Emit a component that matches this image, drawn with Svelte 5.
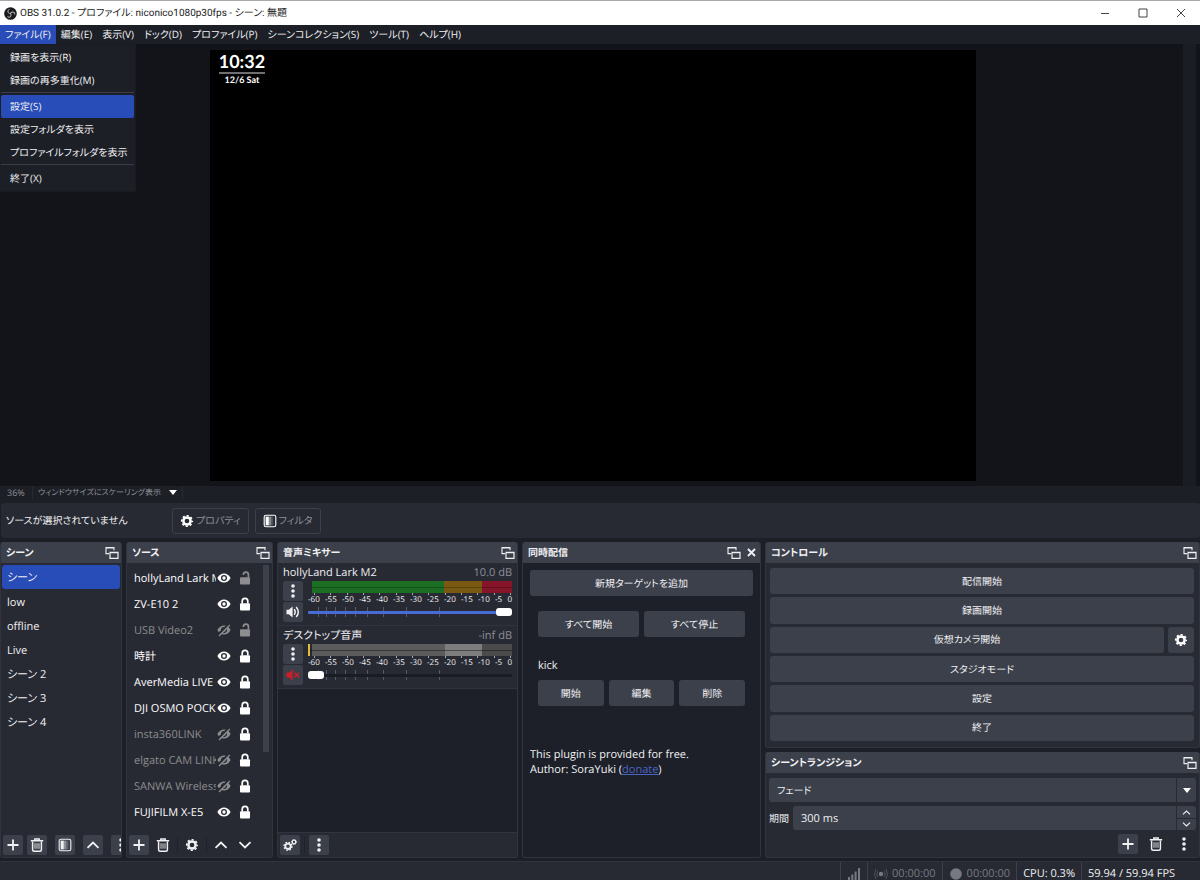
<script lang="ts">
  type Source = { name: string; visible: boolean; locked: boolean };
  type Track = { name: string; db: string; volume: number; muted: boolean };

  const menus = [
    'ファイル(F)', '編集(E)', '表示(V)', 'ドック(D)', 'プロファイル(P)',
    'シーンコレクション(S)', 'ツール(T)', 'ヘルプ(H)',
  ];
  const fileMenu = [
    ['録画を表示(R)', '録画の再多重化(M)'],
    ['設定(S)', '設定フォルダを表示', 'プロファイルフォルダを表示'],
    ['終了(X)'],
  ];
  const scenes = ['シーン', 'low', 'offline', 'Live', 'シーン 2', 'シーン 3', 'シーン 4'];
  const levels = [-60, -55, -50, -45, -40, -35, -30, -25, -20, -15, -10, -5, 0];
  const faderMarks = [5, 9, 13, 18, 23, 29, 37, 48, 64];

  let activeScene = $state('シーン');
  let sources: Source[] = $state([
    { name: 'hollyLand Lark M2', visible: true, locked: false },
    { name: 'ZV-E10 2', visible: true, locked: true },
    { name: 'USB Video2', visible: false, locked: false },
    { name: '時計', visible: true, locked: true },
    { name: 'AverMedia LIVE GAMER', visible: true, locked: true },
    { name: 'DJI OSMO POCKET', visible: true, locked: true },
    { name: 'insta360LINK', visible: false, locked: true },
    { name: 'elgato CAM LINK', visible: false, locked: true },
    { name: 'SANWA Wireless', visible: false, locked: true },
    { name: 'FUJIFILM X-E5', visible: true, locked: true },
  ]);
  let tracks: Track[] = $state([
    { name: 'hollyLand Lark M2', db: '10.0 dB', volume: 100, muted: false },
    { name: 'デスクトップ音声', db: '-inf dB', volume: 0, muted: true },
  ]);
</script>

{#snippet plus()}
  <svg class="icon" viewBox="0 0 14 14"><path d="M7 1.5v11M1.5 7h11" stroke="currentColor" stroke-width="1.8" /></svg>
{/snippet}
{#snippet trash()}
  <svg class="icon" viewBox="0 0 14 14" fill="none" stroke="currentColor">
    <path d="M.8 2.8h12.4M4.8 2.5V1h4.4v1.5" stroke-width="1.4" />
    <path d="M2.6 3.5v8.2q0 1.5 1.5 1.5h5.8q1.5 0 1.5-1.5V3.5" stroke-width="1.5" />
    <path d="M5 5.2v5.6M7 5.2v5.6M9 5.2v5.6" stroke-width="1.2" opacity=".75" />
  </svg>
{/snippet}
{#snippet filter()}
  <svg class="icon" viewBox="0 0 14 14">
    <rect x="1.2" y="1.2" width="11.6" height="11.6" rx="1.8" fill="none" stroke="currentColor" stroke-width="1.1" />
    <rect x="2.6" y="2.6" width="3.2" height="8.8" fill="currentColor" />
    <rect x="5.8" y="2.6" width="2.4" height="8.8" fill="currentColor" opacity=".45" />
    <rect x="8.2" y="2.6" width="2" height="8.8" fill="currentColor" opacity=".2" />
  </svg>
{/snippet}
{#snippet gear()}
  <svg class="icon" viewBox="0 0 14 14" fill="none" stroke="currentColor">
    <circle cx="7" cy="7" r="3.6" stroke-width="2.5" />
    <circle cx="7" cy="7" r="5.3" stroke-width="1.6" stroke-dasharray="2.2 1.963" stroke-dashoffset="1.1" />
  </svg>
{/snippet}
{#snippet gears()}
  <svg class="icon" viewBox="0 0 14 14" fill="none" stroke="currentColor">
    <circle cx="5" cy="8.3" r="2.7" stroke-width="1.8" />
    <circle cx="5" cy="8.3" r="3.9" stroke-width="1.5" stroke-dasharray="1.6 1.463" />
    <circle cx="11" cy="4" r="1.8" stroke-width="1.3" />
    <circle cx="11" cy="4" r="2.5" stroke-width=".9" stroke-dasharray="1 .963" />
  </svg>
{/snippet}
{#snippet up()}
  <svg class="icon" viewBox="0 0 14 14"><path d="M1.5 9.8 7 4.6l5.5 5.2" fill="none" stroke="currentColor" stroke-width="1.8" /></svg>
{/snippet}
{#snippet down()}
  <svg class="icon" viewBox="0 0 14 14"><path d="M1.5 4.2 7 9.4l5.5-5.2" fill="none" stroke="currentColor" stroke-width="1.8" /></svg>
{/snippet}
{#snippet dots()}
  <svg class="icon" viewBox="0 0 14 14" fill="currentColor">
    <circle cx="7" cy="2" r="1.8" /><circle cx="7" cy="7" r="1.8" /><circle cx="7" cy="12" r="1.8" />
  </svg>
{/snippet}
{#snippet float()}
  <svg class="icon" viewBox="0 0 14 14" fill="none" stroke="currentColor">
    <path d="M4 7.6H1V1.5h8v2.8M.5 2h9" stroke-width="1.1" />
    <path d="M5 6.4h8v6H5zM4.5 6.7h9" stroke-width="1.2" />
  </svg>
{/snippet}
{#snippet eye(on: boolean)}
  <svg class="icon" viewBox="0 0 14 14">
    <path d="M.4 7C3.2.9 10.800.9 13.600 7 10.800 13.100 3.200 13.100.4 7z" fill="currentColor" />
    <circle cx="7" cy="7" r="3" fill="#272a33" />
    <circle cx="7" cy="7" r="1.700" fill="currentColor" />
    {#if !on}
      <path d="M12.6.6.8 12" stroke="#272a33" stroke-width="2.4" />
      <path d="M12.8 2 2 13" stroke="currentColor" stroke-width="1.3" />
    {/if}
  </svg>
{/snippet}
{#snippet lock(on: boolean)}
  <svg class="icon" viewBox="0 0 14 14">
    <rect x="2" y="6.2" width="10" height="7.2" rx="1" fill="currentColor" />
    <path d={on ? 'M4.2 6.5V4.2a2.8 2.8 0 0 1 5.6 0v2.3' : 'M5.4 4V3.6a2.5 2.5 0 0 1 5 0v3'} fill="none" stroke="currentColor" stroke-width="1.7" />
  </svg>
{/snippet}
{#snippet speaker(muted: boolean)}
  <svg class="icon" viewBox="0 0 14 14">
    <path d="M.5 4.7h2.3L6.6 1.4v11.2L2.8 9.3H.5z" fill="currentColor" />
    {#if muted}
      <path d="m8.6 4.8 4.4 4.4m0-4.4L8.6 9.2" stroke="currentColor" stroke-width="1.5" />
    {:else}
      <path d="M8.2 4.2q2 2.8 0 5.6M10.2 1.9q4.2 5.1 0 10.2" fill="none" stroke="currentColor" stroke-width="1.5" />
    {/if}
  </svg>
{/snippet}
{#snippet dockHead(title: string, closable: boolean)}
  <header class="dock-head">
    <h2>{title}</h2>
    <button class="bare" aria-label="フローティング">{@render float()}</button>
    {#if closable}
      <button class="bare close" aria-label="閉じる">
        <svg class="icon" viewBox="0 0 14 14"><path d="m3.2 3.2 7.6 7.6m0-7.6-7.6 7.6" stroke="currentColor" stroke-width="2" /></svg>
      </button>
    {/if}
  </header>
{/snippet}

<div class="window">
  <header class="titlebar">
    <svg class="logo" viewBox="0 0 14 14">
      <circle cx="7" cy="7" r="6.8" fill="#1c1a1d" />
      <g fill="none" stroke="#c4c4c6" stroke-width="1">
        <path d="M5.600 2.400q-2.400 1.600-1 3.700 1 1.300 2.600.8" />
        <path d="M5.600 2.400q-2.400 1.600-1 3.700 1 1.300 2.600.8" transform="rotate(120 7 7)" />
        <path d="M5.600 2.400q-2.400 1.600-1 3.700 1 1.300 2.600.8" transform="rotate(240 7 7)" />
      </g>
    </svg>
    <h1>OBS 31.0.2 - プロファイル: niconico1080p30fps - シーン: 無題</h1>
    <div class="window-buttons">
      <button aria-label="最小化"><svg viewBox="0 0 10 10"><path d="M1 5.5h8" /></svg></button>
      <button aria-label="最大化"><svg viewBox="0 0 10 10"><path d="M1 1h8v8H1z" /></svg></button>
      <button aria-label="閉じる"><svg viewBox="0 0 10 10"><path d="m1 1 8 8m0-8L1 9" /></svg></button>
    </div>
  </header>

  <nav class="menubar">
    {#each menus as label, i}
      <button class:open={i === 0}>{label}</button>
    {/each}
    <div class="file-menu" role="menu">
      {#each fileMenu as group}
        <div class="menu-group">
          {#each group as label}
            <button role="menuitem" class:selected={label === '設定(S)'}>{label}</button>
          {/each}
        </div>
      {/each}
    </div>
  </nav>

  <main class="preview">
    <div class="stage">
      <div class="canvas">
        <div class="clock">
          <time>10:32</time>
          <span>12/6 Sat</span>
        </div>
      </div>
    </div>
    <div class="scroll-strip"></div>
  </main>

  <div class="scale-bar">
    <span>36%</span>
    <button>ウィンドウサイズにスケーリング表示
      <svg viewBox="0 0 8 5"><path d="M0 0h8L4 5z" fill="#fff" /></svg>
    </button>
  </div>

  <section class="context-bar">
    <span>ソースが選択されていません</span>
    <button>{@render gear()}プロパティ</button>
    <button>{@render filter()}フィルタ</button>
  </section>

  <div class="docks">
    <section class="dock">
      {@render dockHead('シーン', false)}
      <ul class="scenes">
        {#each scenes as scene}
          <li><button class:selected={scene === activeScene} onclick={() => (activeScene = scene)}>{scene}</button></li>
        {/each}
      </ul>
      <footer class="tools">
        <button class="tool filled" aria-label="追加">{@render plus()}</button>
        <button class="tool filled" aria-label="削除">{@render trash()}</button>
        <i></i>
        <button class="tool filled" aria-label="フィルタ">{@render filter()}</button>
        <i></i>
        <button class="tool filled" aria-label="上へ">{@render up()}</button>
        <i></i>
        <button class="tool filled" aria-label="その他">{@render dots()}</button>
      </footer>
    </section>

    <section class="dock">
      {@render dockHead('ソース', false)}
      <div class="source-area">
        <ul class="sources">
          {#each sources as source}
            <li class:off={!source.visible}>
              <span>{source.name}</span>
              <button class="bare" aria-label="表示" onclick={() => (source.visible = !source.visible)}>{@render eye(source.visible)}</button>
              <button class="bare" class:unlocked={!source.locked} aria-label="ロック" onclick={() => (source.locked = !source.locked)}>{@render lock(source.locked)}</button>
            </li>
          {/each}
        </ul>
        <div class="thumb"></div>
      </div>
      <footer class="tools">
        <button class="tool filled" aria-label="追加">{@render plus()}</button>
        <button class="tool" aria-label="削除">{@render trash()}</button>
        <i></i>
        <button class="tool" aria-label="プロパティ">{@render gear()}</button>
        <i></i>
        <button class="tool" aria-label="上へ">{@render up()}</button>
        <button class="tool" aria-label="下へ">{@render down()}</button>
      </footer>
    </section>

    <section class="dock dark">
      {@render dockHead('音声ミキサー', false)}
      {#each tracks as track, i}
        <div class="track">
          <div class="track-head">
            <label for="volume-{i}">{track.name}</label>
            <output>{track.db}</output>
          </div>
          <div class="track-body">
            <div class="track-buttons">
              <button class="tool filled" aria-label="オプション">{@render dots()}</button>
              <button class="tool filled" class:muted={track.muted} aria-label="ミュート" onclick={() => (track.muted = !track.muted)}>{@render speaker(track.muted)}</button>
            </div>
            <div class="levels">
              <div class="meter" class:muted={track.muted}></div>
              <div class="scale">
                {#each levels as level}
                  <span>{level}</span>
                {/each}
              </div>
              <div class="fader">
                {#each faderMarks as mark}
                  <i style="left: {mark}%"></i>
                {/each}
                <input id="volume-{i}" type="range" min="0" max="100" bind:value={track.volume} style="--fill: {track.volume}%" />
              </div>
            </div>
          </div>
        </div>
      {/each}
      <footer class="tools bordered">
        <button class="tool filled" aria-label="オーディオの詳細">{@render gears()}</button>
        <i></i>
        <button class="tool filled" aria-label="メニュー">{@render dots()}</button>
      </footer>
    </section>

    <section class="dock dark">
      {@render dockHead('同時配信', true)}
      <div class="multi">
        <button class="push">新規ターゲットを追加</button>
        <div class="target">
          <div class="row">
            <button class="push">すべて開始</button>
            <button class="push">すべて停止</button>
          </div>
          <h3>kick</h3>
          <div class="row">
            <button class="push">開始</button>
            <button class="push">編集</button>
            <button class="push">削除</button>
          </div>
        </div>
        <p>This plugin is provided for free.<br />Author: SoraYuki (<a href="#donate">donate</a>)</p>
      </div>
    </section>

    <div class="stack">
      <section class="dock">
        {@render dockHead('コントロール', false)}
        <div class="controls">
          <button class="push">配信開始</button>
          <button class="push">録画開始</button>
          <div class="row">
            <button class="push">仮想カメラ開始</button>
            <button class="push square" aria-label="仮想カメラの設定">{@render gear()}</button>
          </div>
          <button class="push">スタジオモード</button>
          <button class="push">設定</button>
          <button class="push">終了</button>
        </div>
      </section>

      <section class="dock">
        {@render dockHead('シーントランジション', false)}
        <div class="transition">
          <div class="field">
            <select aria-label="トランジション">
              <option>フェード</option>
            </select>
            <span class="side"><svg viewBox="0 0 8 5"><path d="M0 0h8L4 5z" fill="#fff" /></svg></span>
          </div>
          <div class="duration">
            <label for="duration">期間</label>
            <div class="field">
              <input id="duration" type="text" value="300 ms" />
              <div class="side spin">
                <button class="bare" aria-label="増やす">{@render up()}</button>
                <button class="bare" aria-label="減らす">{@render down()}</button>
              </div>
            </div>
          </div>
          <footer class="tools end">
            <button class="tool filled" aria-label="追加">{@render plus()}</button>
            <button class="tool" aria-label="削除">{@render trash()}</button>
            <button class="tool" aria-label="その他">{@render dots()}</button>
          </footer>
        </div>
      </section>
    </div>
  </div>

  <footer class="statusbar">
    <div>
      <svg class="icon" viewBox="0 0 14 14" fill="currentColor"><path d="M1 10h2v3H1zM4.300 7.500h2V13h-2zM7.600 4.500h2V13h-2zM11 1h2v12h-2z" /></svg>
    </div>
    <div>
      <svg class="icon" viewBox="0 0 14 14" fill="none" stroke="currentColor">
        <circle cx="7" cy="7" r="2.2" fill="currentColor" stroke="none" />
        <path d="M3.900 3.900q-2.200 3.100 0 6.200M10.100 3.900q2.200 3.100 0 6.200M2 2q-3 5 0 10M12 2q3 5 0 10" opacity=".5" />
      </svg>
      00:00:00
    </div>
    <div>
      <svg class="icon" viewBox="0 0 14 14"><circle cx="7" cy="7" r="5.800" fill="currentColor" /></svg>
      00:00:00
    </div>
    <div class="bright">CPU: 0.3%</div>
    <div class="bright fps">59.94 / 59.94 FPS</div>
  </footer>
</div>

<style>
  :global(body) {
    margin: 0;
    background: #1d1f27;
  }
  .window {
    display: flex;
    flex-direction: column;
    height: 100vh;
    min-height: 620px;
    box-sizing: border-box;
    overflow: hidden;
    border-top: 1px solid #a9a9ab;
    color: #f0f0f2;
    font: 11px/15px 'Open Sans', 'Noto Sans CJK JP', sans-serif;
    font-feature-settings: 'palt';
    text-rendering: geometricPrecision;
  }
  .window * {
    box-sizing: border-box;
  }
  button, input, select {
    margin: 0;
    padding: 0;
    border: none;
    background: none;
    color: inherit;
    font: inherit;
    font-feature-settings: inherit;
    text-rendering: inherit;
    white-space: nowrap;
  }
  h1, h2, h3, p, ul {
    margin: 0;
    padding: 0;
    font-size: inherit;
    list-style: none;
  }
  svg {
    display: block;
    flex: none;
  }
  .icon {
    width: 14px;
    height: 14px;
  }

  .titlebar {
    display: flex;
    align-items: center;
    height: 24px;
    padding-left: 4px;
    background: #fff;
    color: #1b1b1b;
    font-family: Roboto, 'Noto Sans CJK JP', sans-serif;
    font-size: 10px;
  }
  .titlebar h1 {
    flex: 1;
    font-weight: 400;
  }
  .logo {
    width: 13px;
    height: 13px;
    margin-right: 3px;
  }
  .window-buttons button {
    width: 38px;
    height: 24px;
    padding: 0 14px;
  }
  .window-buttons {
    display: flex;
  }
  .window-buttons path {
    fill: none;
    stroke: #444;
  }

  .menubar {
    position: relative;
    display: flex;
    height: 19px;
    font-size: 10px;
  }
  .menubar > button {
    padding: 0 5px;
  }
  .menubar > .open {
    background: #284cb8;
  }
  .file-menu {
    position: absolute;
    top: 100%;
    left: 0;
    z-index: 5;
    width: 136px;
    padding: 1px;
    background: #1d1f27;
    border: 1px solid #191b21;
    border-left: 0;
  }
  .menu-group + .menu-group {
    padding-top: 2px;
    border-top: 1px solid #3a3d47;
  }
  .menu-group button {
    display: block;
    width: 100%;
    height: 23px;
    padding: 0 9px;
    border-radius: 2px;
    text-align: left;
  }
  .menu-group .selected {
    background: #284cb8;
  }

  .preview {
    display: flex;
    flex: 1;
    min-height: 0;
    padding-right: 4px;
    background: #131419;
  }
  .stage {
    display: flex;
    justify-content: center;
    flex: 1;
    padding: 6px 0 5px 3px;
  }
  .canvas {
    height: 100%;
    aspect-ratio: 16 / 9;
    background: #000;
  }
  .scroll-strip {
    width: 13px;
    background: #1b1d24;
  }
  .clock {
    display: flex;
    flex-direction: column;
    align-items: center;
    width: 46px;
    margin-left: 9px;
    color: #fff;
  }
  .clock time {
    font: 700 18px/22px Lato, sans-serif;
  }
  .clock span {
    width: 100%;
    border-top: 2px solid #6f6f6f;
    font: 700 9px/12px Lato, sans-serif;
    text-align: center;
  }

  .scale-bar {
    display: flex;
    height: 13px;
    margin-bottom: 4px;
    color: #8d8f96;
    font-size: 9px;
    line-height: 13px;
  }
  .scale-bar span {
    width: 32px;
    padding-left: 7px;
  }
  .scale-bar button {
    display: flex;
    align-items: center;
    gap: 8px;
    padding: 0 5px;
    border: solid #272a33;
    border-width: 0 1px;
    font-size: 8px;
  }
  .scale-bar svg, .side > svg {
    width: 8px;
    height: 5px;
  }

  .context-bar {
    display: flex;
    align-items: center;
    gap: 6px;
    height: 35px;
    margin: 0 0 4px 1px;
    padding-left: 5px;
    border-radius: 3px;
    background: #272a33;
  }
  .context-bar span {
    min-width: 160px;
    font-size: 10px;
  }
  .context-bar button {
    display: flex;
    align-items: center;
    gap: 2px;
    height: 26px;
    padding: 0 7px;
    border: 1px solid #3c404d;
    border-radius: 3px;
    color: #8d8f96;
    font-size: 10px;
  }
  .context-bar .icon, .controls .icon {
    color: #fff;
  }

  .docks {
    display: grid;
    grid-template-columns: 122fr 147fr 241fr 239fr 435fr;
    gap: 4px;
    min-height: 316px;
  }
  .stack {
    display: flex;
    flex-direction: column;
    gap: 4px;
  }
  .stack > :first-child {
    flex: 1;
  }
  .dock {
    display: flex;
    flex-direction: column;
    min-width: 0;
    overflow: hidden;
    border: solid #31343e;
    border-width: 0 1px 1px;
    border-radius: 3px;
    background: #272a33;
  }
  .dark {
    background: #1d2028;
  }
  .dock-head {
    display: flex;
    align-items: center;
    gap: 4px;
    height: 21px;
    margin: 0 -1px;
    padding: 0 3px 0 6px;
    background: #3c404b;
  }
  .dock-head h2 {
    flex: 1;
    font-size: 10px;
    font-weight: 600;
  }
  .bare, .tool {
    display: flex;
    align-items: center;
    justify-content: center;
  }
  .close .icon {
    width: 13px;
    height: 13px;
  }
  .tools {
    display: flex;
    align-items: center;
    gap: 4px;
    height: 25px;
    margin-top: auto;
    padding: 0 2px;
  }
  .tools i {
    width: 1px;
    height: 16px;
    background: #1f222a;
  }
  .tool {
    flex: none;
    width: 20px;
    height: 20px;
    border-radius: 2px;
  }
  .filled {
    background: #3c404b;
  }

  .scenes {
    padding: 1px 1px 0;
  }
  .scenes button {
    display: block;
    width: 100%;
    height: 24px;
    padding: 0 5px;
    border-radius: 3px;
    text-align: left;
  }
  .scenes .selected {
    margin: 1px 0;
    background: #284cb8;
  }
  .source-area {
    display: flex;
    gap: 11px;
    padding: 2px 3px 0 7px;
  }
  .sources {
    flex: 1;
    min-width: 0;
  }
  .sources li {
    display: flex;
    align-items: center;
    height: 26px;
    color: #fff;
  }
  .sources span {
    flex: 1;
    overflow: hidden;
    white-space: nowrap;
  }
  .sources .bare {
    margin-left: 7px;
  }
  .sources span + .bare {
    margin-left: 1px;
  }
  .sources .off span, .off span + .bare, .sources .unlocked {
    color: #8d8c8e;
  }
  .thumb {
    width: 6px;
    height: 187px;
    background: #3c404b;
  }

  .track {
    padding: 1px 5px 3px;
    border-bottom: 1px solid #31343e;
    background: #272a33;
  }
  .track-head {
    display: flex;
    justify-content: space-between;
    height: 17px;
    line-height: 17px;
  }
  .track-head output {
    color: #8d8f96;
  }
  .track-body {
    display: flex;
    gap: 5px;
  }
  .track-buttons {
    display: flex;
    flex-direction: column;
    gap: 1px;
  }
  .muted.tool {
    color: #d01c26;
  }
  .levels {
    flex: 1;
    min-width: 0;
  }
  .meter {
    height: 12px;
    margin-left: 4px;
    background:
      linear-gradient(#0004, #0004) 0 6px / 100% 1px no-repeat,
      linear-gradient(90deg, #1c6e22 66%, #7a5a12 66% 85%, #86152a 85%);
  }
  .meter.muted {
    margin-left: 0;
    border-left: 2px solid #e0bd3c;
    background:
      linear-gradient(#0006, #0006) 0 6px / 100% 1px no-repeat,
      linear-gradient(90deg, #272a33 1%, #5c5c5c 1% 67%, #7d7d7d 67% 85%, #4b4b4b 85%);
  }
  .scale {
    display: flex;
    justify-content: space-between;
    background: repeating-linear-gradient(90deg, #a5a6ab 0 1px, transparent 1px 8%) 6px 0 / 100% 2px no-repeat;
    font-size: 8px;
    line-height: 13px;
  }
  .fader {
    position: relative;
    height: 14px;
  }
  .fader i {
    position: absolute;
    top: 1px;
    width: 1px;
    height: 10px;
    background: #555a68;
  }
  .fader input {
    position: relative;
    display: block;
    width: 100%;
    height: 12px;
    appearance: none;
  }
  .fader input::-webkit-slider-runnable-track {
    height: 3px;
    border-radius: 1px;
    background: linear-gradient(90deg, #476bd7 var(--fill), #1a1c23 var(--fill));
  }
  .fader input::-webkit-slider-thumb {
    width: 16px;
    height: 8px;
    margin-top: -3px;
    border-radius: 3px;
    background: #fff;
    appearance: none;
  }
  .bordered {
    border-top: 1px solid #31343e;
    background: #272a33;
  }

  .push {
    flex: 1;
    height: 26px;
    border-radius: 3px;
    background: #3c404b;
    font-size: 10px;
  }
  .row {
    display: flex;
    gap: 5px;
  }
  .multi {
    display: flex;
    flex-direction: column;
    padding: 7px 7px 0;
  }
  .multi > .push {
    flex: none;
  }
  .target {
    padding: 15px 8px 0;
  }
  .target h3 {
    margin: 21px 0 7px;
    font-weight: 400;
  }
  .multi p {
    margin-top: 41px;
  }
  .multi a {
    color: #4a64c4;
  }

  .controls {
    display: flex;
    flex: 1;
    flex-direction: column;
    gap: 3px;
    padding: 5px 5px 6px 4px;
  }
  .controls .row {
    flex: 1;
    gap: 4px;
  }
  .controls .push {
    height: auto;
  }
  .controls .square {
    display: flex;
    flex: none;
    align-items: center;
    justify-content: center;
    width: 26px;
  }

  .transition {
    padding: 5px 3px 0;
  }
  .field {
    display: flex;
    flex: 1;
    height: 24px;
    border-radius: 3px;
    background: #3c404b;
  }
  .field select, .field input {
    flex: 1;
    min-width: 0;
    padding: 0 8px;
    appearance: none;
  }
  .field select {
    font-size: 10px;
  }
  .side {
    display: flex;
    align-items: center;
    justify-content: center;
    width: 20px;
    border-left: 1px solid #272a33;
  }
  .spin {
    flex-direction: column;
  }
  .spin .bare {
    width: 100%;
    height: 12px;
  }
  .spin .bare + .bare {
    border-top: 1px solid #272a33;
  }
  .spin .icon {
    width: 9px;
    height: 9px;
  }
  .duration {
    display: flex;
    align-items: center;
    gap: 4px;
    margin-top: 4px;
  }
  .duration label {
    font-size: 10px;
  }
  .end {
    justify-content: flex-end;
    gap: 8px;
    height: 27px;
  }

  .statusbar {
    display: flex;
    justify-content: flex-end;
    height: 19px;
    margin-top: 3px;
    border-top: 1px solid #31343e;
    background: #272a33;
    color: #777982;
  }
  .statusbar div {
    display: flex;
    align-items: center;
    gap: 4px;
    padding: 5px 6px 0;
    border-left: 1px solid #3c404b;
  }
  .statusbar .bright {
    color: #f0f0f2;
  }
  .statusbar .fps {
    width: 119px;
  }
</style>
